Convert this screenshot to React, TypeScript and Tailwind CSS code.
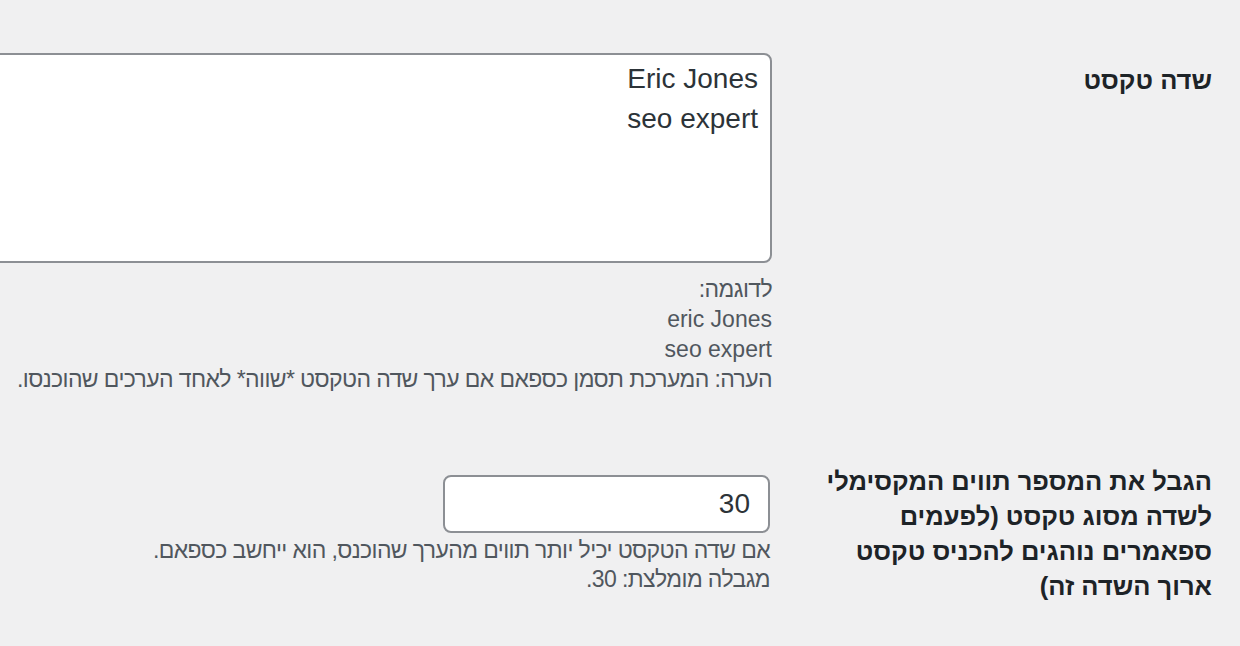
import React from "react";

export default function App() {
  return (
    <div
      dir="rtl"
      className="w-[1240px] h-[646px] overflow-hidden bg-[#f0f0f1] text-[#1d2327] font-['Liberation_Sans',Arial,sans-serif] pr-[28px] pt-[53px]"
    >
      <div className="flex items-start">
        <div className="w-[440px] shrink-0 pl-[46px] pt-[10px] text-[25.5px] leading-[35px] font-bold text-[#1d2327]">
          שדה טקסט
        </div>
        <div className="flex flex-col items-start shrink-0 w-[1000px]">
          <textarea
            dir="rtl"
            readOnly
            defaultValue={"Eric Jones\nseo expert"}
            className="w-[1000px] h-[210px] resize-none bg-white border-2 border-[#8c8f94] rounded-[8px] pt-[4px] pr-[12px] text-[28px] leading-[40px] text-[#2c3338] outline-none font-['Liberation_Sans',Arial,sans-serif]"
          />
          <div className="mt-[11px] text-[23px] leading-[30px] text-[#50575e]">
            <div className="tracking-[-0.6px]">לדוגמה:</div>
            <div>eric Jones</div>
            <div>seo expert</div>
            <div className="tracking-[-0.6px]">הערה: המערכת תסמן כספאם אם ערך שדה הטקסט *שווה* לאחד הערכים שהוכנסו.</div>
          </div>
        </div>
      </div>

      <div className="flex items-start mt-[70px]">
        <div className="w-[440px] shrink-0 pl-[46px] text-[25.5px] leading-[35px] font-bold text-[#1d2327]">
          הגבל את המספר תווים המקסימלי לשדה מסוג טקסט (לפעמים ספאמרים נוהגים להכניס טקסט ארוך השדה זה)
        </div>
        <div className="flex flex-col items-start pr-[2px] pt-[11px]">
          <input
            dir="rtl"
            readOnly
            defaultValue="30"
            className="w-[327px] h-[58px] bg-white border-2 border-[#8c8f94] rounded-[8px] pr-[18px] text-[28px] text-[#2c3338] outline-none font-['Liberation_Sans',Arial,sans-serif]"
          />
          <div className="mt-[3px] text-[23px] leading-[29px] text-[#50575e] tracking-[-0.6px]">
            <div>אם שדה הטקסט יכיל יותר תווים מהערך שהוכנס, הוא ייחשב כספאם.</div>
            <div>מגבלה מומלצת: 30.</div>
          </div>
        </div>
      </div>
    </div>
  );
}
